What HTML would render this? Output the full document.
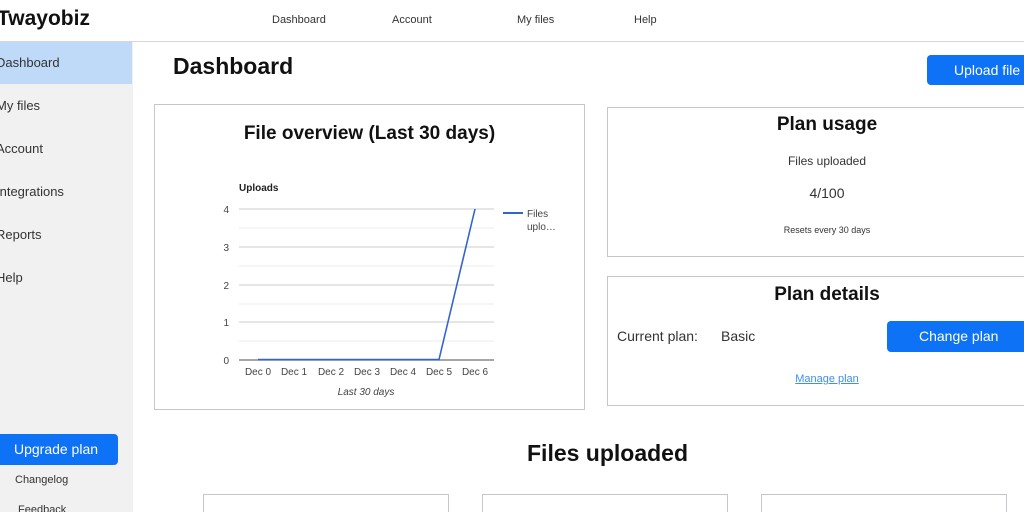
<!DOCTYPE html>
<html><head><style>
*{margin:0;padding:0;box-sizing:border-box}
html,body{width:1024px;height:512px;overflow:hidden}
body{background:#fff;font-family:"Liberation Sans",sans-serif;position:relative;color:#222}
.a{position:absolute}
.nav{font-size:11px;color:#333}
.side{font-size:13px;color:#333}
.box{position:absolute;border:1px solid #c4c6cc;background:#fff}
.btn{position:absolute;background:#0d72f5;color:#fff;border-radius:4px;text-align:center}
.c{text-align:center}
</style></head><body>
<div class="a" style="left:-3px;top:7px;font-size:21px;font-weight:bold;color:#111">Twayobiz</div>
<div class="a nav" style="left:272px;top:14px">Dashboard</div>
<div class="a nav" style="left:392px;top:14px">Account</div>
<div class="a nav" style="left:517px;top:14px">My files</div>
<div class="a nav" style="left:634px;top:14px">Help</div>
<div class="a" style="left:0;top:41px;width:1024px;height:1px;background:#d6d6d6"></div>
<div class="a" style="left:0;top:42px;width:133px;height:470px;background:#f1f1f1"></div>
<div class="a" style="left:0;top:42px;width:132px;height:42px;background:#bfdaf9"></div>
<div class="a side" style="left:-4px;top:55px">Dashboard</div>
<div class="a side" style="left:-4px;top:98px">My files</div>
<div class="a side" style="left:-4px;top:141px">Account</div>
<div class="a side" style="left:-4px;top:184px">Integrations</div>
<div class="a side" style="left:-4px;top:227px">Reports</div>
<div class="a side" style="left:-4px;top:270px">Help</div>
<div class="btn" style="left:-6px;top:434px;width:124px;height:31px;line-height:31px;font-size:14px">Upgrade plan</div>
<div class="a" style="left:15px;top:474px;font-size:11px;color:#333">Changelog</div>
<div class="a" style="left:18px;top:504px;font-size:11px;color:#333">Feedback</div>
<div class="a" style="left:173px;top:53px;font-size:23px;font-weight:bold;color:#111">Dashboard</div>
<div class="btn" style="left:927px;top:55px;width:110px;height:30px;line-height:30px;font-size:14px;text-align:left;padding-left:27px">Upload file</div>

<div class="box" style="left:154px;top:104px;width:431px;height:306px"></div>
<div class="a c" style="left:154px;top:123px;width:431px;font-size:19px;font-weight:bold;color:#111">File overview (Last 30 days)</div>
<svg class="a" style="left:154px;top:170px" width="431" height="235" font-family="Liberation Sans" font-size="10" fill="#444">
<text x="85" y="21" font-weight="bold" fill="#222">Uploads</text>
<g stroke="#ececec"><line x1="85" x2="340" y1="58" y2="58"/><line x1="85" x2="340" y1="96" y2="96"/><line x1="85" x2="340" y1="134" y2="134"/><line x1="85" x2="340" y1="171" y2="171"/></g>
<g stroke="#ccc"><line x1="85" x2="340" y1="39" y2="39"/><line x1="85" x2="340" y1="77" y2="77"/><line x1="85" x2="340" y1="115" y2="115"/><line x1="85" x2="340" y1="152" y2="152"/></g>
<line x1="85" x2="340" y1="190" y2="190" stroke="#888" stroke-width="1.5"/>
<g text-anchor="end"><text x="75" y="43">4</text><text x="75" y="81">3</text><text x="75" y="119">2</text><text x="75" y="156">1</text><text x="75" y="194">0</text></g>
<polyline points="104,189.5 285,189.5 321,39" fill="none" stroke="#3366cc" stroke-width="1.6"/>
<g text-anchor="middle"><text x="104" y="205">Dec 0</text><text x="140" y="205">Dec 1</text><text x="177" y="205">Dec 2</text><text x="213" y="205">Dec 3</text><text x="249" y="205">Dec 4</text><text x="285" y="205">Dec 5</text><text x="321" y="205">Dec 6</text>
<text x="212" y="225" font-style="italic">Last 30 days</text></g>
<line x1="349" x2="369" y1="43" y2="43" stroke="#3366cc" stroke-width="2"/>
<text x="373" y="47">Files</text><text x="373" y="60">uplo…</text>
</svg>

<div class="box" style="left:607px;top:107px;width:430px;height:150px"></div>
<div class="a c" style="left:607px;top:114px;width:440px;font-size:19px;font-weight:bold;color:#111">Plan usage</div>
<div class="a c" style="left:607px;top:154px;width:440px;font-size:12px;color:#333">Files uploaded</div>
<div class="a c" style="left:607px;top:185px;width:440px;font-size:14px;color:#333">4/100</div>
<div class="a c" style="left:607px;top:225px;width:440px;font-size:9px;color:#333">Resets every 30 days</div>

<div class="box" style="left:607px;top:276px;width:430px;height:130px"></div>
<div class="a c" style="left:607px;top:284px;width:440px;font-size:19px;font-weight:bold;color:#111">Plan details</div>
<div class="a" style="left:617px;top:328px;font-size:14px;color:#333">Current plan:</div>
<div class="a" style="left:721px;top:328px;font-size:14px;color:#333">Basic</div>
<div class="btn" style="left:887px;top:321px;width:150px;height:31px;line-height:31px;font-size:14px;text-align:left;padding-left:32px">Change plan</div>
<div class="a c" style="left:607px;top:373px;width:440px;font-size:11px;color:#3d8ef5;text-decoration:underline">Manage plan</div>

<div class="a" style="left:527px;top:440px;font-size:23px;font-weight:bold;color:#111">Files uploaded</div>
<div class="box" style="left:203px;top:494px;width:246px;height:18px;border-bottom:none"></div>
<div class="box" style="left:482px;top:494px;width:246px;height:18px;border-bottom:none"></div>
<div class="box" style="left:761px;top:494px;width:246px;height:18px;border-bottom:none"></div>
</body></html>
